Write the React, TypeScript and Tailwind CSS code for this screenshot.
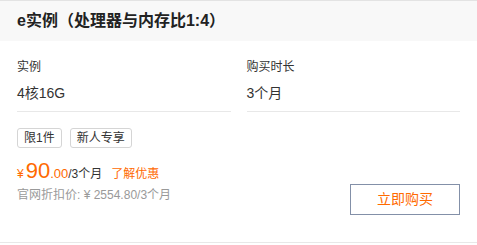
export default function App() {
  const specs = [
    { label: "实例", value: "4核16G" },
    { label: "购买时长", value: "3个月" },
  ];

  return (
    <div
      className="w-[477px] h-[245px] bg-white text-[#333]"
      style={{ fontFamily: '"Liberation Sans", "Noto Sans CJK SC", sans-serif' }}
    >
      <div className="h-[243px] border-b border-[#e8e8e8]">
        <div className="h-[41px] bg-[#f8f8f8] border-t border-[#e3e3e3] px-[17px] flex items-center">
          <h3 className="text-[16px] font-bold text-[#222] leading-none">e实例（处理器与内存比1:4）</h3>
        </div>

        <div className="px-[17px]">
          <div className="grid grid-cols-2 gap-4 pt-[17px]">
            {specs.map((s) => (
              <div key={s.label} className="border-b border-[#e8e8e8] pb-[8px]">
                <div className="text-[12px] leading-[18px]">{s.label}</div>
                <div className="text-[14px] leading-[20px] mt-[7px]">{s.value}</div>
              </div>
            ))}
          </div>

          <div className="flex justify-between items-end">
            <div className="mb-[27px]">
              <div className="flex gap-2 mt-[16px]">
                <span className="h-[20px] px-[6px] flex items-center text-[12px] border border-[#d5d5d5] rounded-[3px]">限1件</span>
                <span className="h-[20px] px-[6px] flex items-center text-[12px] border border-[#d5d5d5] rounded-[3px]">新人专享</span>
              </div>
              <div className="flex items-baseline mt-[6px] h-[28px]">
                <span className="text-[12px] text-[#ff6a00]">¥</span>
                <span className="text-[22px] text-[#ff6a00] ml-[2px]">90</span>
                <span className="text-[13px] text-[#ff6a00]">.00</span>
                <span className="text-[12px]">/3个月</span>
                <span className="text-[12px] text-[#ff6a00] ml-[9px]">了解优惠</span>
              </div>
              <div className="text-[12px] text-[#999] leading-[18px] mt-[4px]">官网折扣价: ¥ 2554.80/3个月</div>
            </div>
            <button className="w-[110px] h-[31px] mb-[16px] border border-[#8390a8] text-[14px] text-[#ff6a00] bg-white">
              立即购买
            </button>
          </div>
        </div>
      </div>
    </div>
  );
}
